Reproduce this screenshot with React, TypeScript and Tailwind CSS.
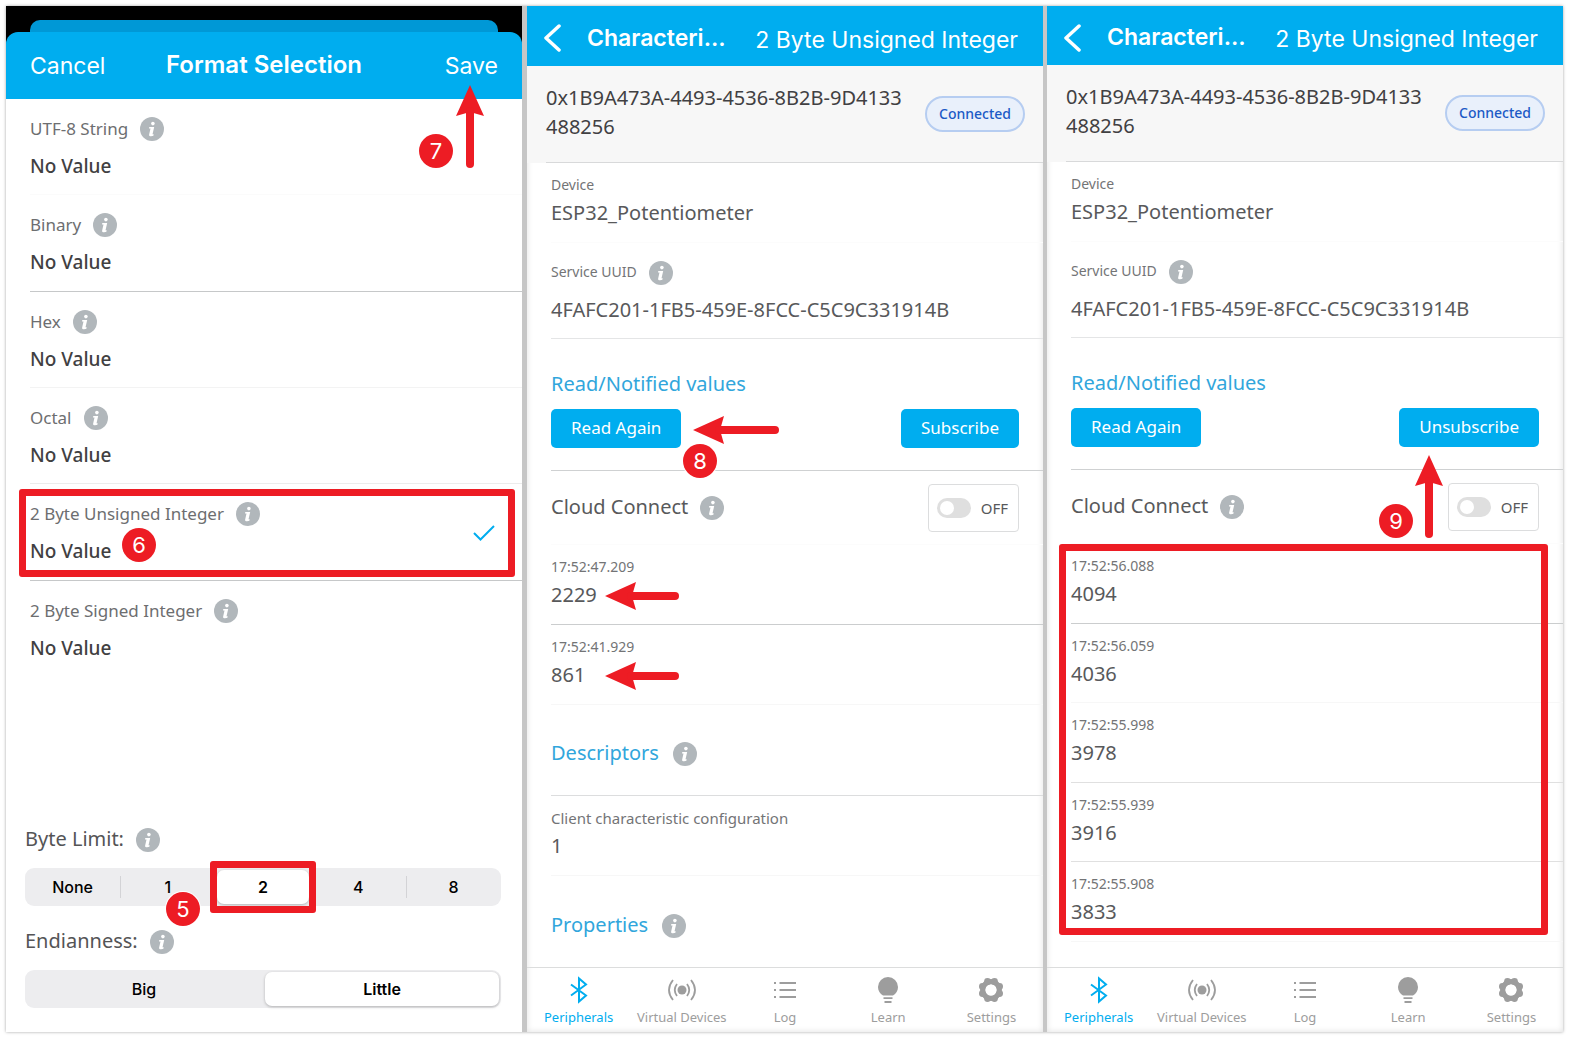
import type { ReactNode } from "react"
import clsx from "clsx"

const formats = [
  { name: "UTF-8 String", line: "border-[#fbfbfb]" },
  { name: "Binary", line: "border-[#c6c8c9]" },
  { name: "Hex", line: "border-[#f3f3f3]" },
  { name: "Octal", line: "border-[#ececec]" },
  { name: "2 Byte Unsigned Integer", line: "border-[#c6c8c9]", selected: true },
  { name: "2 Byte Signed Integer", line: "border-transparent" },
]

const firstReadings = [
  { time: "17:52:47.209", value: "2229", line: "border-[#cbcdce]", arrow: true },
  { time: "17:52:41.929", value: "861", line: "border-[#f7f7f7]", arrow: true },
]

const liveReadings = [
  { time: "17:52:56.088", value: "4094", line: "border-[#cbcdce]" },
  { time: "17:52:56.059", value: "4036", line: "border-[#f7f7f7]" },
  { time: "17:52:55.998", value: "3978", line: "border-[#e0e0e0]" },
  { time: "17:52:55.939", value: "3916", line: "border-[#e0e0e0]" },
  { time: "17:52:55.908", value: "3833", line: "border-[#f7f7f7]" },
]

function InfoButton({ label }: { label: string }) {
  return (
    <button type="button" aria-label={`About ${label}`} className="h-6 w-6 shrink-0">
      <svg viewBox="0 0 24 24" className="h-6 w-6">
        <circle cx="12" cy="12" r="12" fill="#b1b7bb" />
        <circle cx="12.9" cy="6.6" r="1.8" fill="#fff" />
        <path d="M9.3 10.1h4.9l-1.7 7.2h1.2l-.3 1.5c-1.2.6-4.7 1-4.3-1.1l1.4-6.2H9z" fill="#fff" />
      </svg>
    </button>
  )
}

// Numbered step marker
function Step({ n, className }: { n: number; className: string }) {
  return (
    <span
      className={clsx(
        "absolute z-10 flex h-[34px] w-[34px] items-center justify-center rounded-full bg-[#ed1c24] font-['Inter',sans-serif] text-[22px] leading-none text-white ring-1 ring-white",
        className
      )}
    >
      {n}
    </span>
  )
}

function ArrowLeft({ length, className }: { length: number; className: string }) {
  return (
    <svg width={length} height="28" viewBox={`0 0 ${length} 28`} className={clsx("absolute z-10", className)}>
      <path d="M0 14 31 0 27 14 31 28z" fill="#ed1c24" />
      <path d={`M26 14H${length - 4}`} stroke="#ed1c24" strokeWidth="8" strokeLinecap="round" />
    </svg>
  )
}

function ArrowUp({ className }: { className: string }) {
  return (
    <svg width="28" height="83" viewBox="0 0 28 83" className={clsx("absolute z-10", className)}>
      <path d="M14 0 0 31 14 27 28 31z" fill="#ed1c24" />
      <path d="M14 26V79" stroke="#ed1c24" strokeWidth="8" strokeLinecap="round" />
    </svg>
  )
}

function Highlight({ className }: { className: string }) {
  return <div className={clsx("pointer-events-none absolute border-[7px] border-[#ed1c24] rounded-[3px]", className)} />
}

function Segments({ name, options, selected }: { name: string; options: string[]; selected: string }) {
  const at = options.indexOf(selected)
  return (
    <div className="flex h-[38px] rounded-[9px] bg-[#ededef] font-['Inter',sans-serif] text-[16px] font-medium text-black">
      {options.map((option, i) => (
        <label key={option} className="relative flex flex-1 items-center p-[2px]">
          {i > 0 && i !== at && i !== at + 1 && <span className="absolute left-0 h-[22px] w-px bg-[#d3d3d6]" />}
          <input type="radio" name={name} defaultChecked={option === selected} className="absolute inset-0 appearance-none" />
          <span
            className={clsx(
              "flex h-full flex-1 items-center justify-center rounded-[7px]",
              option === selected && "z-[1] bg-white font-semibold shadow-[0_1px_3px_rgba(0,0,0,0.25)]"
            )}
          >
            {option}
          </span>
          {name === "byte-limit" && option === "2" && <Highlight className="-inset-x-[5px] -inset-y-[7px] z-[2]" />}
        </label>
      ))}
    </div>
  )
}

function FormatPanel() {
  return (
    <section className="relative flex flex-1 flex-col bg-white">
      <div className="bg-black px-6 pt-[14px]">
        <div className="h-3 rounded-t-[10px] bg-[#0098d6]" />
      </div>
      <div className="bg-black">
        <header className="grid h-[67px] grid-cols-[1fr_auto_1fr] items-center rounded-t-[12px] bg-[#00adef] px-6 pt-[2px] font-['Inter',sans-serif] text-[23px] text-white">
          <button type="button" className="justify-self-start">
            Cancel
          </button>
          <h1 className="pb-1 text-[24px] font-semibold">Format Selection</h1>
          <button type="button" className="justify-self-end">
            Save
          </button>
        </header>
      </div>
      <ArrowUp className="right-[38px] top-[79px]" />
      <Step n={7} className="right-[69px] top-[128px]" />

      <ul className="grid h-[578px] auto-rows-fr">
        {formats.map((format) => (
          <li key={format.name} className="relative pl-6">
            <div className={clsx("h-full border-b pt-[18px]", format.line)}>
              <div className="flex items-center gap-3">
                <span className="text-[17px] leading-6 text-[#6d6e70]">{format.name}</span>
                <InfoButton label={format.name} />
              </div>
              <p className="mt-[13px] text-[19px] font-medium leading-6 text-[#414042]">No Value</p>
            </div>
            {format.selected && (
              <>
                <svg viewBox="0 0 22 16" className="absolute right-[27px] top-[41px] h-4 w-[22px]">
                  <path d="M1 8 7.5 14.5 21 1" fill="none" stroke="#00adef" strokeWidth="2" />
                </svg>
                <Highlight className="bottom-1 left-[13px] right-[7px] top-[5px]" />
                <Step n={6} className="left-[116px] top-[44px]" />
              </>
            )}
          </li>
        ))}
      </ul>

      <div className="mt-auto pb-6 pl-[19px] pr-[21px]">
        <fieldset className="relative">
          <div className="mb-[15px] flex items-center gap-3">
            <span className="pb-[2px] text-[20px] leading-6 text-[#545456]">Byte Limit:</span>
            <InfoButton label="Byte Limit" />
          </div>
          <Segments name="byte-limit" options={["None", "1", "2", "4", "8"]} selected="2" />
          <Step n={5} className="bottom-[-20px] left-[141px]" />
        </fieldset>
        <fieldset className="mt-[23px]">
          <div className="mb-[15px] flex items-center gap-3">
            <span className="pb-[2px] text-[20px] leading-6 text-[#545456]">Endianness:</span>
            <InfoButton label="Endianness" />
          </div>
          <Segments name="endianness" options={["Big", "Little"]} selected="Little" />
        </fieldset>
      </div>
    </section>
  )
}

interface DetailProps {
  label: string
  value: string
  line: string
  wide?: boolean
  children?: ReactNode
}

function Detail({ label, value, line, wide, children }: DetailProps) {
  return (
    <div className={clsx("relative h-full border-b pt-3", line)}>
      <p className={clsx("leading-5 text-[#737476]", wide ? "text-[15px]" : "text-[14px]")}>{label}</p>
      <p className="mt-1 text-[20px] leading-7 text-[#58595b]">{value}</p>
      {children}
    </div>
  )
}

const tabs = [
  {
    name: "Peripherals",
    active: true,
    icon: <path d="M6 8.500 21 19.500 14 25.500V2.500l7 6L6 19.500" fill="none" stroke="currentColor" strokeWidth="2" />,
  },
  {
    name: "Virtual Devices",
    icon: (
      <>
        <circle cx="14" cy="14" r="4.500" fill="currentColor" />
        <path
          d="M9 8q-4.500 6 0 12M19 8q4.500 6 0 12M5 4q-8 10 0 20M23 4q8 10 0 20"
          fill="none"
          stroke="currentColor"
          strokeWidth="1.800"
        />
      </>
    ),
  },
  {
    name: "Log",
    icon: (
      <path
        d="M3 7h2M3 14h2M3 21h2M8.500 7H25M8.500 14H25M8.500 21H25"
        fill="none"
        stroke="currentColor"
        strokeWidth="1.800"
      />
    ),
  },
  {
    name: "Learn",
    icon: (
      <>
        <path d="M14 1a10 10 0 0 0-10 10c0 4 2 6.500 5 8.500h10c3-2 5-4.500 5-8.500A10 10 0 0 0 14 1z" fill="currentColor" />
        <path d="M9.500 22.200h9M10.500 26h7" stroke="currentColor" strokeWidth="1.800" />
      </>
    ),
  },
  {
    name: "Settings",
    icon: (
      <>
        <circle cx="14" cy="14" r="8.200" fill="none" stroke="currentColor" strokeWidth="5.400" />
        <g fill="currentColor">
          <circle cx="10.500" cy="5.400" r="3.400" />
          <circle cx="17.500" cy="5.400" r="3.400" />
          <circle cx="22.600" cy="10.500" r="3.400" />
          <circle cx="22.600" cy="17.500" r="3.400" />
          <circle cx="17.500" cy="22.600" r="3.400" />
          <circle cx="10.500" cy="22.600" r="3.400" />
          <circle cx="5.400" cy="17.500" r="3.400" />
          <circle cx="5.400" cy="10.500" r="3.400" />
        </g>
        <circle cx="14" cy="14" r="5.500" fill="#fff" />
      </>
    ),
  },
]

function TabBar() {
  return (
    <nav className="flex h-[65px] border-t border-[#dcdddd] pt-2">
      {tabs.map((tab) => (
        <a
          key={tab.name}
          href={`#${tab.name}`}
          className={clsx("flex flex-1 flex-col items-center text-[13px]", tab.active ? "text-[#00adef]" : "text-[#9d9d9d]")}
        >
          <svg viewBox="0 0 28 28" className="h-7 w-7 overflow-visible">
            {tab.icon}
          </svg>
          <span className="mt-[3px] whitespace-nowrap leading-5">{tab.name}</span>
        </a>
      ))}
    </nav>
  )
}

interface CharacteristicPanelProps {
  headerHeight: string
  action: string
  readings: { time: string; value: string; line: string; arrow?: boolean }[]
  listHeight: string
  live?: boolean
  children?: ReactNode
}

function CharacteristicPanel({ headerHeight, action, readings, listHeight, live, children }: CharacteristicPanelProps) {
  const buttonStyle = "h-[39px] rounded-[5px] bg-[#00adef] px-5 pb-[2px] text-[17px] text-white"

  return (
    <section className="flex min-w-0 flex-1 flex-col bg-white shadow-[inset_0_0_6px_rgba(0,0,0,0.12)]">
      <header
        className={clsx(
          "flex items-center justify-between bg-[#00adef] pl-4 pr-[25px] pt-2 font-['Inter',sans-serif] text-[23px] text-white",
          headerHeight
        )}
      >
        <div className="flex items-center gap-[26px] pb-1">
          <button type="button" aria-label="Back">
            <svg viewBox="0 0 18 28" className="h-7 w-[18px]">
              <path d="M16 2 3 14 16 26" fill="none" stroke="#fff" strokeWidth="3.500" strokeLinecap="round" strokeLinejoin="round" />
            </svg>
          </button>
          <h2 className="font-semibold">Characteri...</h2>
        </div>
        <span>2 Byte Unsigned Integer</span>
      </header>

      <div className="bg-[#f7f7f7] pl-[19px]">
        <div className="flex h-[97px] items-center justify-between border-b border-[#d8d9da] pr-[18px]">
          <p className="w-[364px] break-all pb-1 text-[20px] leading-[29px] text-[#414042]">
            0x1B9A473A-4493-4536-8B2B-9D4133488256
          </p>
          <span className="flex h-9 items-center rounded-full border-2 border-[#b6cdf1] bg-[#e9f0fb] px-3 pb-[2px] text-[14px] font-medium text-[#1b5ac6]">
            Connected
          </span>
        </div>
      </div>

      <div className="flex flex-1 flex-col pl-6">
        <div className="h-20">
          <Detail label="Device" value="ESP32_Potentiometer" line="border-[#fcfcfc]" />
        </div>
        <div className="h-24 border-b border-[#e4e5e6] pt-[17px]">
          <div className="flex items-center gap-3">
            <span className="pb-[2px] text-[14px] leading-6 text-[#737476]">Service UUID</span>
            <InfoButton label="Service UUID" />
          </div>
          <p className="mt-[10px] text-[20px] leading-7 text-[#58595b]">4FAFC201-1FB5-459E-8FCC-C5C9C331914B</p>
        </div>

        <div className="relative h-[132px] border-b border-[#cfd1d2] pr-6 pt-[31px]">
          <h3 className="text-[20px] leading-7 text-[#31a6dc]">Read/Notified values</h3>
          <div className="mt-[11px] flex justify-between">
            <button type="button" className={buttonStyle}>
              Read Again
            </button>
            <button type="button" className={buttonStyle}>
              {action}
            </button>
          </div>
          {live ? (
            <ArrowUp className="right-[120px] top-[117px]" />
          ) : (
            <>
              <ArrowLeft length={86} className="left-[142px] top-[77px]" />
              <Step n={8} className="left-[132px] top-[105px]" />
            </>
          )}
        </div>

        <div className="relative flex h-[74px] items-start justify-between border-b border-[#fcfcfc] pr-6 pt-[13px]">
          <div className="flex h-12 items-center gap-3">
            <span className="pb-[2px] text-[20px] leading-7 text-[#58595b]">Cloud Connect</span>
            <InfoButton label="Cloud Connect" />
          </div>
          <label className="flex h-12 items-center gap-[10px] rounded-[4px] border border-[#dcddde] pl-2 pr-[10px] text-[15px] text-[#58595b]">
            <input
              type="checkbox"
              role="switch"
              className="flex h-5 w-[34px] appearance-none items-center rounded-full bg-[#dfdfdf] px-[3px] before:h-[14px] before:w-[14px] before:rounded-full before:bg-white"
            />
            OFF
          </label>
          {live && <Step n={9} className="right-[150px] top-[34px]" />}
        </div>

        <div className={clsx("relative grid auto-rows-fr", listHeight)}>
          {readings.map((reading) => (
            <Detail key={reading.time} label={reading.time} value={reading.value} line={reading.line}>
              {reading.arrow && <ArrowLeft length={74} className="left-[54px] top-[37px]" />}
            </Detail>
          ))}
          {live && <Highlight className="-left-3 bottom-[7px] right-[15px] top-0" />}
        </div>

        {children}
      </div>

      <TabBar />
    </section>
  )
}

function SectionTitle({ title, className }: { title: string; className?: string }) {
  return (
    <div className={clsx("flex items-center gap-[14px] pt-2", className)}>
      <h3 className="pb-[2px] text-[20px] leading-7 text-[#31a6dc]">{title}</h3>
      <InfoButton label={title} />
    </div>
  )
}

export default function App() {
  return (
    <div className="flex min-h-screen bg-white p-[6px] font-['Noto_Sans',sans-serif]">
      <main className="flex flex-1 bg-[#c6c6c6] shadow-[0_0_3px_rgba(0,0,0,0.35)]">
        <FormatPanel />
        <div className="w-[5px]" />
        <CharacteristicPanel
          headerHeight="h-[60px]"
          action="Subscribe"
          readings={firstReadings}
          listHeight="h-[160px]"
        >
          <SectionTitle title="Descriptors" className="h-[91px] border-b border-[#dcddde]" />
          <div className="h-20">
            <Detail label="Client characteristic configuration" value="1" line="border-[#f7f7f7]" wide />
          </div>
          <SectionTitle title="Properties" className="flex-1" />
        </CharacteristicPanel>
        <div className="w-1" />
        <CharacteristicPanel
          headerHeight="h-[59px]"
          action="Unsubscribe"
          readings={liveReadings}
          listHeight="h-[398px]"
          live
        />
      </main>
    </div>
  )
}
